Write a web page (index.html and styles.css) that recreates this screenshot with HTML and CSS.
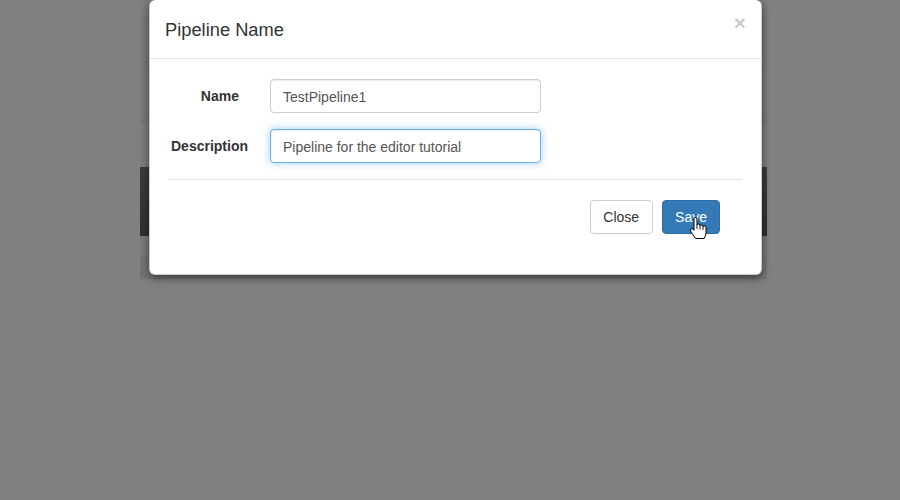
FILE: index.html
```html
<!DOCTYPE html>
<html>
<head>
<meta charset="utf-8">
<link rel="stylesheet" href="styles.css">
</head>
<body>
<div class="stage">
  <div class="page">
    <div class="band b1"></div>
    <div class="band line"></div>
    <div class="band b2"></div>
    <div class="band line"></div>
    <div class="band b3"></div>
    <div class="band line"></div>
    <div class="band b4"></div>
    <div class="band line"></div>
    <div class="band b5"></div>
    <div class="band line"></div>
    <div class="band b6"></div>
    <div class="band dark"></div>
    <div class="band b7"></div>
    <div class="band line"></div>
    <div class="band b8"></div>
  </div>

  <div class="modal">
    <div class="modal-header">
      <h4 class="modal-title">Pipeline Name</h4>
      <span class="close">×</span>
    </div>
    <div class="modal-body">
      <div class="form-row">
        <label class="label label-name">Name</label>
        <div class="input">TestPipeline1</div>
      </div>
      <div class="form-row">
        <label class="label">Description</label>
        <div class="input focused">Pipeline for the editor tutorial</div>
      </div>
      <div class="modal-footer">
        <button class="btn btn-default">Close</button>
        <button class="btn btn-primary">Save</button>
      </div>
    </div>
    <svg class="cursor" width="18" height="23" viewBox="0 0 18 23">
      <path d="M4 2 Q4 0.5 5.5 0.5 Q7 0.5 7 2 V8 Q7 7 8.5 7 Q10 7 10 8.5 V9 Q10 8 11.5 8 Q13 8 13 9.5 V10 Q13 9 14.5 9 Q16 9 16 10.5 V16 Q16 18 15 19.5 L14.2 21.5 H5.5 L2 16.5 Q0.5 14.5 0.5 12.8 Q0.7 11 2.3 11.8 L4 13.2 Z" fill="#fff" stroke="#000" stroke-width="1" stroke-linejoin="round"/>
      <path d="M7 8 V12 M10 9 V12.5 M13 10 V13" stroke="#000" stroke-width="0.9" fill="none"/>
    </svg>
  </div>
</div>
</body>
</html>
```

FILE: styles.css
```css
html, body {
  margin: 0;
  padding: 0;
}

body {
  background: #808080;
  width: 900px;
  height: 500px;
  overflow: hidden;
  font-family: "Liberation Sans", Arial, sans-serif;
  color: #333;
}

.stage {
  position: relative;
  width: 900px;
  height: 500px;
}

.page {
  margin-left: 140px;
  width: 627px;
  height: 280px;
  display: flex;
  flex-direction: column;
  background: #7c7c7c;
}

.band { flex: none; }
.band.line { height: 1px; background: #727272; }
.b1 { height: 16px; background: #7d7d7d; }
.b2 { height: 45px; background: #7b7b7b; }
.b3 { height: 5px; background: #7a7a7a; }
.b4 { height: 46px; background: #7c7c7c; }
.b5 { height: 5px; background: #7a7a7a; }
.b6 { height: 45px; background: #7d7d7d; }
.dark {
  height: 69px;
  background: linear-gradient(#3d3d3d, #303030);
}
.b7 { height: 20px; background: #7a7a7a; }
.b8 { height: 22px; background: #757575; }

.modal {
  position: absolute;
  left: 149px;
  top: 0;
  width: 611px;
  height: 274px;
  background: #fff;
  border: 1px solid rgba(0, 0, 0, 0.2);
  border-top: 0;
  border-radius: 6px;
  box-shadow: 0 3px 9px rgba(0, 0, 0, 0.5);
}

.modal-header {
  position: relative;
  padding: 17px 15px 15px;
  border-bottom: 1px solid #e5e5e5;
}

.modal-title {
  margin: 0;
  font-size: 18.3px;
  font-weight: normal;
  line-height: 26px;
  color: #333;
}

.close {
  position: absolute;
  right: 15px;
  top: 12px;
  font-size: 21px;
  font-weight: bold;
  line-height: 1;
  color: #000;
  opacity: 0.2;
  text-shadow: 0 1px 0 #fff;
}

.modal-body {
  padding: 20px 19px 0;
}

.form-row {
  display: grid;
  grid-template-columns: 101px 271px;
  align-items: center;
  margin-bottom: 16px;
}

.label {
  font-size: 14px;
  font-weight: bold;
  text-align: right;
  padding-right: 22px;
  color: #333;
}

.label-name {
  padding-right: 31px;
}

.input {
  box-sizing: border-box;
  height: 34px;
  padding: 7px 12px;
  font-size: 14px;
  line-height: 20px;
  color: #555;
  background: #fff;
  border: 1px solid #ccc;
  border-radius: 4px;
  box-shadow: inset 0 1px 1px rgba(0, 0, 0, 0.075);
}

.input.focused {
  border-color: #66afe9;
  box-shadow: inset 0 1px 1px rgba(0, 0, 0, 0.075), 0 0 8px rgba(102, 175, 233, 0.6);
}

.modal-footer {
  margin-top: 0;
  border-top: 1px solid #e5e5e5;
  padding: 20px 22px 0 0;
  display: flex;
  justify-content: flex-end;
  gap: 9px;
}

.btn {
  box-sizing: border-box;
  height: 34px;
  padding: 6px 12px;
  font-family: "Liberation Sans", Arial, sans-serif;
  font-size: 14px;
  line-height: 20px;
  border-radius: 4px;
  border: 1px solid transparent;
  margin: 0;
}

.btn-default {
  color: #333;
  background: #fff;
  border-color: #ccc;
  padding-right: 13px;
}

.btn-primary {
  color: #fff;
  background: #337ab7;
  border-color: #2e6da4;
}

.cursor {
  position: absolute;
  left: 540px;
  top: 217px;
}
```
